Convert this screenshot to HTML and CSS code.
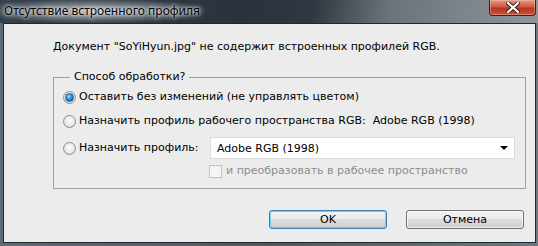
FILE: index.html
```html
<!DOCTYPE html>
<html lang="ru">
<head>
<meta charset="utf-8">
<link rel="stylesheet" href="styles.css">
</head>
<body>
<div class="window">
  <div class="titlebar">
    <span class="title">Отсутствие встроенного профиля</span>
    <span class="close">
      <svg width="14" height="11" viewBox="0 0 14 11"><path d="M2 1 L12 10 M12 1 L2 10" stroke="#3a1a14" stroke-width="4" stroke-linecap="square"/><path d="M2 1 L12 10 M12 1 L2 10" stroke="#ffffff" stroke-width="2.2" stroke-linecap="square"/></svg>
    </span>
  </div>
  <div class="client">
    <p class="message">Документ "SoYiHyun.jpg" не содержит встроенных профилей RGB.</p>
    <fieldset class="group">
      <legend class="legend">Способ обработки?</legend>
      <div class="row row1"><span class="radio checked"></span><span class="label">Оставить без изменений (не управлять цветом)</span></div>
      <div class="row row2"><span class="radio"></span><span class="label">Назначить профиль рабочего пространства RGB:&nbsp; Adobe RGB (1998)</span></div>
      <div class="row row3"><span class="radio"></span><span class="label label3">Назначить профиль:</span>
        <div class="select"><span>Adobe RGB (1998)</span><span class="arrow"></span></div>
      </div>
      <div class="row row4"><span class="checkbox"></span><span class="label disabled">и преобразовать в рабочее пространство</span></div>
    </fieldset>
    <div class="buttons">
      <button class="btn default">OK</button>
      <button class="btn">Отмена</button>
    </div>
  </div>
</div>
</body>
</html>
```
FILE: styles.css
```css
* { box-sizing: border-box; }
html, body { margin: 0; padding: 0; }
body {
  width: 538px; height: 246px; overflow: hidden;
  font-family: "DejaVu Sans", sans-serif;
  font-size: 11px;
  color: #000;
}
.window {
  width: 538px; height: 246px;
  display: flex; flex-direction: column;
  background: linear-gradient(90deg, #5e6b78 0%, #4d5862 50%, #6f777f 100%);
}
.titlebar {
  height: 23px;
  display: flex; justify-content: space-between; align-items: flex-start;
  background:
    radial-gradient(ellipse 115px 13px at 95px 11px, rgba(225,232,236,0.7), rgba(225,232,236,0) 100%),
    linear-gradient(100deg, #34404b 0%, #2a333c 45%, #2f3840 58%, #6b737a 72%, #8e959b 100%);
}
.title {
  padding-left: 4px;
  line-height: 21px;
  font-family: "Noto Sans", "Open Sans", sans-serif;
  font-size: 12px;
  color: #000;
  text-shadow: 0 0 6px #fff, 0 0 3px #fff;
}
.close {
  width: 47px; height: 16px;
  margin-right: 2px;
  display: flex; align-items: center; justify-content: center;
  border: 1px solid #4a1d17;
  border-top: none;
  border-radius: 0 0 4px 4px;
  background: linear-gradient(180deg, #e39a86 0%, #d0583f 45%, #b8351d 55%, #c9553a 100%);
  box-shadow: inset 0 0 0 1px rgba(255,200,180,0.4);
}
.client {
  flex: 1;
  margin: 0 2px 3px 3px;
  border: 1px solid #23282d;
  background: #ececec;
  display: flex; flex-direction: column;
}
.message {
  margin: 16px 0 0 49px;
  line-height: 14px;
}
.group {
  margin: 16px 0 0 49px;
  width: 473px;
  padding: 6px 9px 10px 9px;
  border: 1px solid #a0a0a0;
  min-width: 0;
  display: flex; flex-direction: column;
}
.legend {
  margin-left: 7px;
  padding: 0 4px;
  line-height: 14px;
}
.row { display: flex; align-items: center; }
.row1 { height: 14px; }
.row2 { height: 14px; margin-top: 10px; }
.row3 { height: 22px; margin-top: 9px; }
.row4 { height: 14px; margin-top: 5px; padding-left: 146px; }
.label { margin-left: 3px; line-height: 14px; white-space: nowrap; }
.label3 { width: 131px; }
.disabled { color: #8d8d8d; margin-left: 4px; }
.radio {
  width: 13px; height: 13px; flex: none;
  border-radius: 50%;
  border: 1px solid #8f8f8f;
  background: radial-gradient(circle at 50% 40%, #ffffff 0%, #e8e8e8 55%, #c9c9c9 100%);
  display: flex; align-items: center; justify-content: center;
}
.radio.checked::after {
  content: "";
  width: 7px; height: 7px; border-radius: 50%;
  background: radial-gradient(circle at 40% 35%, #a6dcff 0%, #2b8ad8 45%, #0c4f8c 100%);
  border: 1px solid #1d5f97;
}
.checkbox {
  width: 13px; height: 13px; flex: none;
  border: 1px solid #c4c4c4;
  background: #f4f4f4;
}
.select {
  flex: 1;
  height: 22px;
  margin-right: 1px;
  background: #fff;
  border: 1px solid #dadada;
  display: flex; align-items: center; justify-content: space-between;
  padding: 0 6px 0 6px;
}
.arrow {
  width: 0; height: 0;
  border-left: 4px solid transparent;
  border-right: 4px solid transparent;
  border-top: 4px solid #000;
}
.buttons {
  display: flex; justify-content: flex-end; gap: 19px;
  margin: 21px 11px 0 0;
}
.btn {
  width: 118px; height: 19px;
  font-family: "DejaVu Sans", sans-serif;
  font-size: 11px;
  color: #000;
  padding: 0;
  border: 1px solid #707070;
  border-radius: 3px;
  background: linear-gradient(180deg, #f2f2f2 0%, #ebebeb 49%, #dddddd 50%, #cfcfcf 100%);
  box-shadow: inset 0 0 0 1px rgba(255,255,255,0.7);
}
.btn.default {
  border-color: #3c7fb1;
  box-shadow: inset 0 0 0 1px #6fd0f6;
}
```
